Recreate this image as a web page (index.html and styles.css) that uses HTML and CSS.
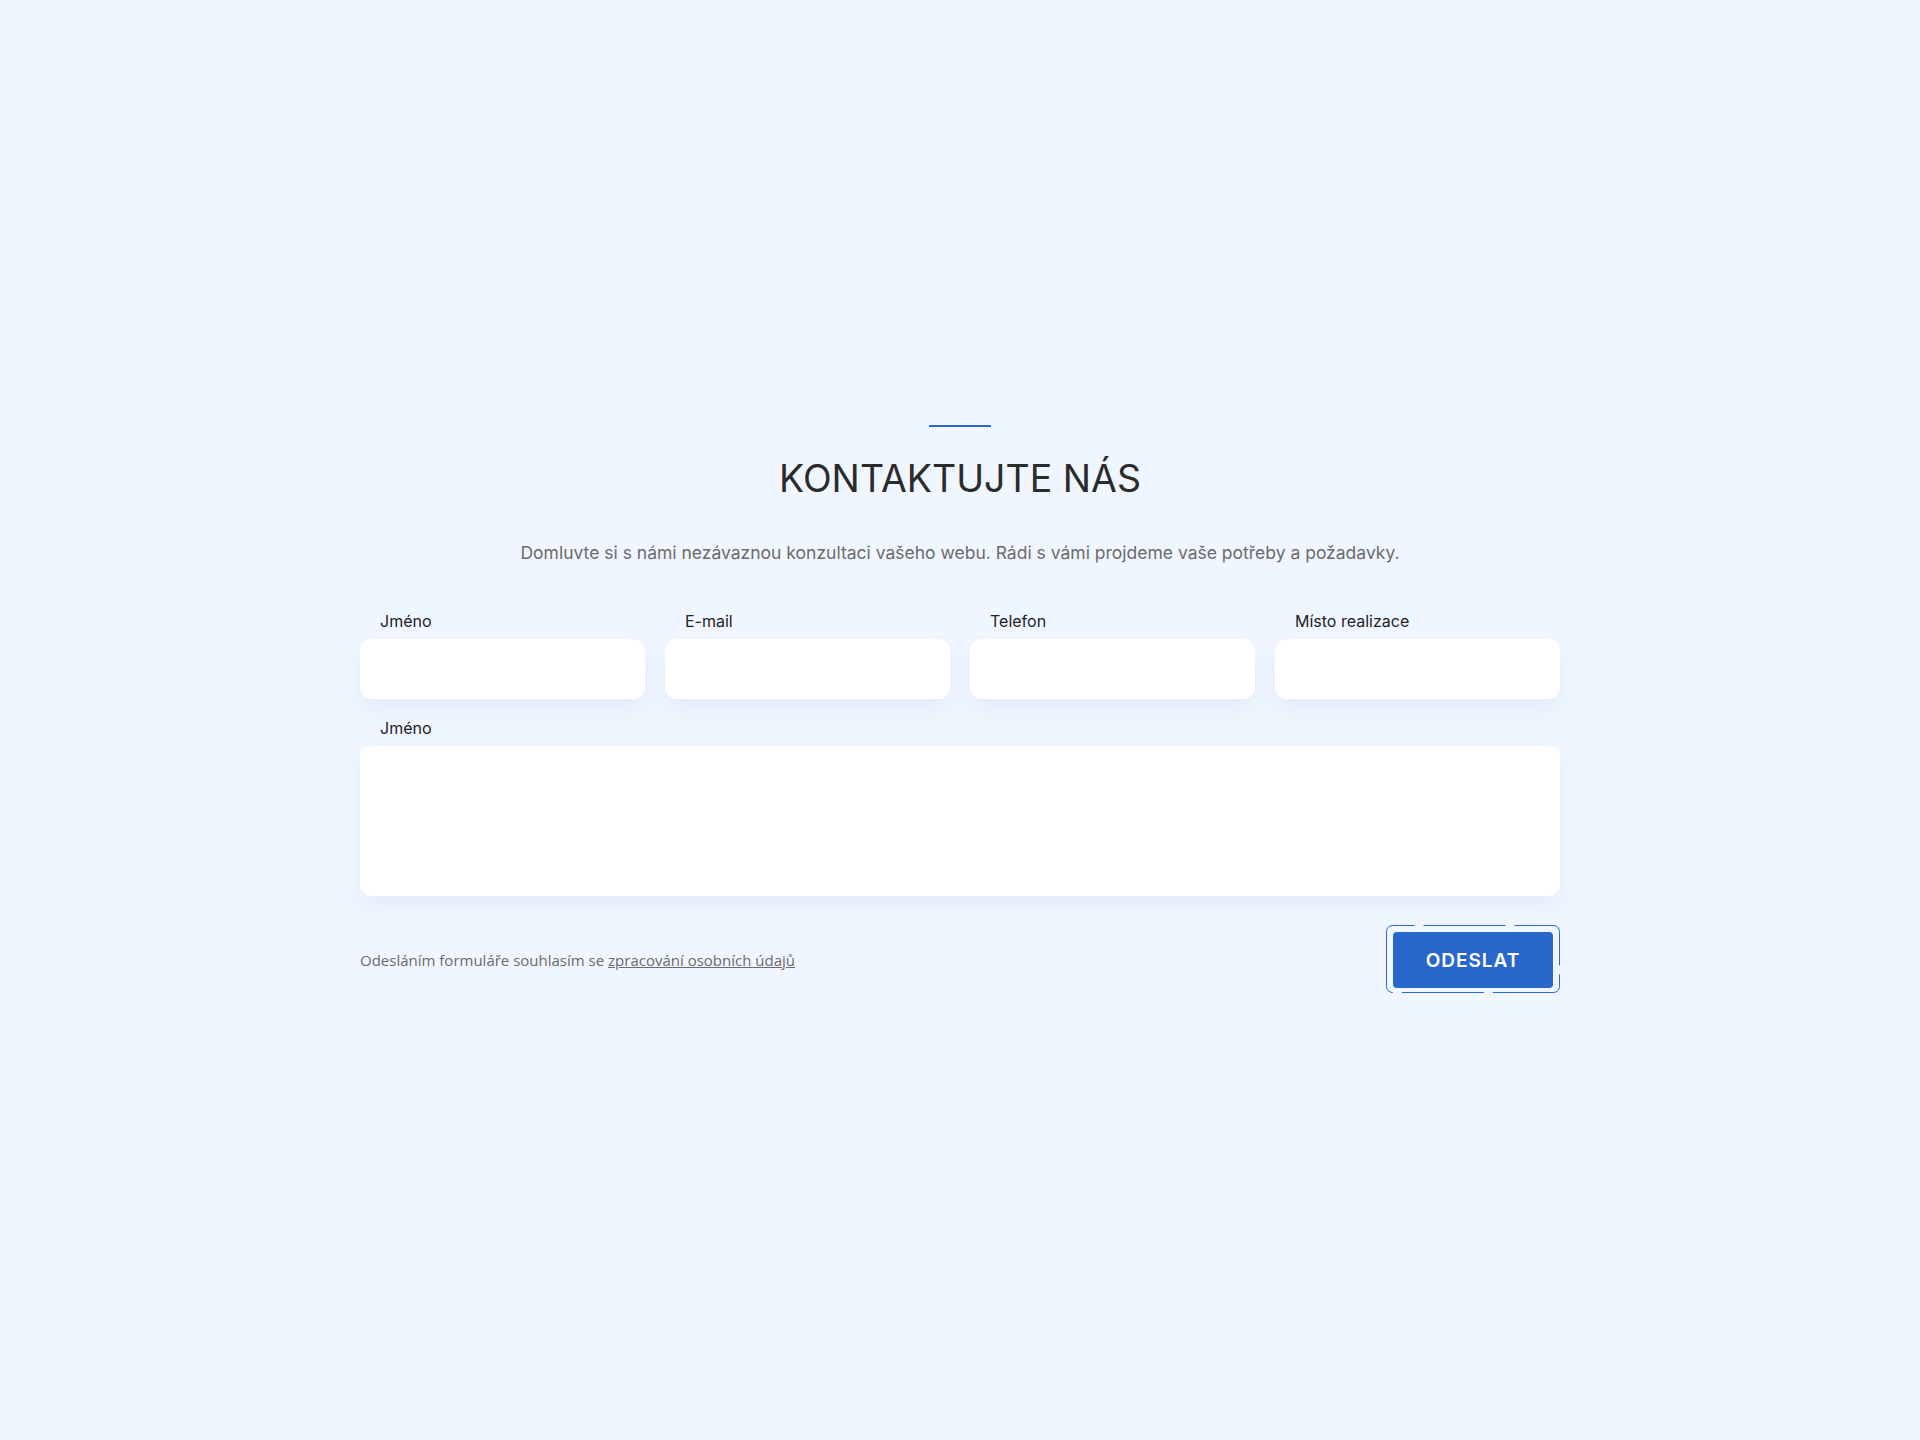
FILE: index.html
```html
<!DOCTYPE html>
<html lang="cs">
<head>
    <meta charset="UTF-8">
    <meta name="viewport" content="width=device-width, initial-scale=1.0">
    <title>Kontaktujte nás</title>
    <link rel="stylesheet" href="styles.css">
</head>
<body>
    <section class="contact">
        <span class="contact-line"></span>
        <h2 class="contact-title">KONTAKTUJTE NÁS</h2>
        <p class="contact-lead">Domluvte si s námi nezávaznou konzultaci vašeho webu. Rádi s vámi projdeme vaše potřeby a požadavky.</p>

        <form class="contact-form">
            <div class="form-row">
                <label class="field">
                    <span class="field-label">Jméno</span>
                    <input type="text" class="field-input">
                </label>
                <label class="field">
                    <span class="field-label">E-mail</span>
                    <input type="email" class="field-input">
                </label>
                <label class="field">
                    <span class="field-label">Telefon</span>
                    <input type="tel" class="field-input">
                </label>
                <label class="field">
                    <span class="field-label">Místo realizace</span>
                    <input type="text" class="field-input">
                </label>
            </div>

            <label class="field">
                <span class="field-label">Jméno</span>
                <textarea class="field-input field-textarea"></textarea>
            </label>

            <div class="form-footer">
                <p class="consent">Odesláním formuláře souhlasím se <a href="#">zpracování osobních údajů</a></p>
                <div class="submit-wrap">
                    <button type="submit" class="submit">ODESLAT</button>
                    <svg class="submit-ring" width="174" height="68" viewBox="0 0 174 68">
                        <rect x="0.5" y="0.5" width="173" height="67" rx="6" ry="6" />
                    </svg>
                </div>
            </div>
        </form>
    </section>
</body>
</html>
```

FILE: styles.css
```css
body {
    margin: 0;
    background: #f0f6ff;
    font-family: 'Inter', 'Noto Sans', sans-serif;
    color: #2b2b2b;
}
.contact {
    width: 1200px;
    margin: 0 auto;
    padding-top: 425px;
    display: flex;
    flex-direction: column;
    align-items: center;
}
.contact-line {
    display: block;
    width: 62px;
    height: 2px;
    background: #2a67cc;
}
.contact-title {
    margin: 30px 0 0;
    font-size: 37.5px;
    font-weight: 400;
    line-height: 44px;
    color: #2b2b2b;
}
.contact-lead {
    margin: 40px 0 0;
    font-size: 17.5px;
    line-height: 24px;
    color: #6b6b6b;
}
.contact-form {
    width: 100%;
    margin-top: 46px;
    display: flex;
    flex-direction: column;
}
.form-row {
    display: grid;
    grid-template-columns: repeat(4, minmax(0, 1fr));
    gap: 20px;
}
.field {
    display: flex;
    flex-direction: column;
    min-width: 0;
}
.form-row + .field {
    margin-top: 19px;
}
.field-label {
    padding-left: 20px;
    font-size: 16px;
    line-height: 20px;
    margin-bottom: 8px;
    color: #222;
}
.field-input {
    box-sizing: border-box;
    width: 100%;
    min-width: 0;
    height: 60px;
    border: none;
    border-radius: 12px;
    background: #fff;
    box-shadow: 0 10px 20px rgba(40, 80, 150, 0.06);
    font: inherit;
    padding: 0 20px;
    outline: none;
}
.field-textarea {
    height: 150px;
    resize: none;
    padding: 18px 20px;
}
.form-footer {
    margin-top: 29px;
    display: flex;
    justify-content: space-between;
    align-items: center;
}
.consent {
    margin: 0;
    font-family: 'Open Sans', sans-serif;
    font-size: 15px;
    color: #6b6b6b;
}
.consent a {
    color: #6b6b6b;
}
.submit-wrap {
    position: relative;
    padding: 7px;
}
.submit {
    display: block;
    width: 160px;
    height: 56px;
    border: none;
    border-radius: 4px;
    background: #2a67cc;
    color: #fff;
    font-family: 'Inter', sans-serif;
    font-size: 19px;
    font-weight: 600;
    letter-spacing: 1px;
    cursor: pointer;
}
.submit-ring {
    position: absolute;
    left: 0;
    top: 0;
    pointer-events: none;
}
.submit-ring rect {
    fill: none;
    stroke: #2a67cc;
    stroke-width: 1;
    stroke-dasharray: 82 9;
    stroke-dashoffset: 60;
}
```
